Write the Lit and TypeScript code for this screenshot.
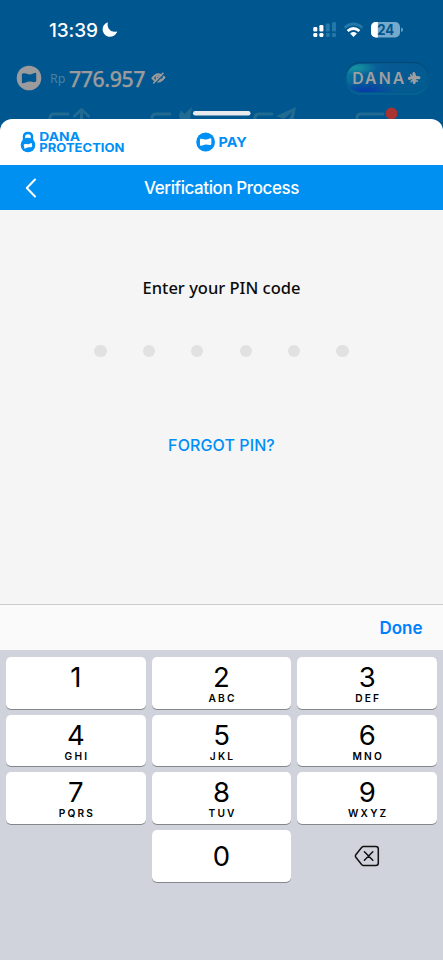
import { LitElement, html, svg, css, nothing } from "lit";
import { customElement, property } from "lit/decorators.js";

const flag = svg`<path stroke-linejoin="round" d="M-6.7 -3.3 Q-6.7 -4.2 -5.8 -4.3 C-3 -4.8 -1.4 -3.2 .8 -3.3 C2.8 -3.4 4 -4.6 6 -4.9 Q6.8 -5 6.8 -4.1 V2.7 Q6.8 3.6 5.9 3.8 C3.6 4.2 2.4 3.2 .4 3.3 C-1.8 3.4 -3 4.6 -5.8 4.9 Q-6.7 5 -6.7 4.1Z"/>`;

@customElement("phone-header")
export class PhoneHeader extends LitElement {
  static styles = css`
    :host { display: block; height: 120px; background: #00568f; position: relative; overflow: hidden; }
    .status { display: flex; align-items: center; height: 60px; padding: 0 40px 0 49px; }
    .time { font: 500 19px/24px Inter, sans-serif; color: #fff; letter-spacing: -0.1px; width: 51px; margin-top: 1px; }
    .moon { margin-left: 2px; }
    .right { margin-left: auto; display: block; }
    .balance { display: flex; align-items: center; height: 36px; padding: 0 13px 0 16px; color: #9b9a9c; }
    .rp { font: 400 12.5px/20px "Noto Sans", sans-serif; color: #4a80a0; margin: 1px 0 0 8px; width: 19px; }
    .sum { font: 500 21.4px/30px "Noto Sans", sans-serif; letter-spacing: -0.45px; width: 77px; margin-top: 1px; -webkit-text-stroke: 0.25px #9b9a9c; }
    .eye { margin-left: 5px; }
    .plus { margin-left: auto; }
    .behind { display: block; position: absolute; left: 0; top: 100px; }
    svg { display: block; flex: none; }
  `;
  render() {
    return html`
      <div class="status">
        <span class="time">13:39</span>
        <svg class="moon" width="16" height="16" viewBox="0 0 16 16"><path fill="#fff" d="M5.8 .7 C4.6 5.8 8.7 11 14.6 9.5 Q15.4 9.4 15 10.2 C12.5 15.1 6.5 16.2 3 12.7 C-1.1 8.8 .4 2.6 5.1 .5 Q5.9 .2 5.8 .7Z"/></svg>
        <svg class="right" width="92" height="20" viewBox="312 20 92 20">
          <g fill="#fff">
            <rect x="314.3" y="27" width="4" height="4.5" rx="1.2"/><rect x="320.4" y="25" width="4" height="6.5" rx="1.2"/>
            <rect x="314.3" y="33" width="4" height="4" rx="1.2"/><rect x="320.4" y="33" width="4" height="4" rx="1.2"/>
          </g>
          <g fill="#2378a8">
            <rect x="326.8" y="23.6" width="4" height="7.9" rx="1.2"/><rect x="333" y="22" width="4" height="9.5" rx="1.2"/>
            <rect x="326.8" y="33" width="4" height="4" rx="1.2"/><rect x="333" y="33" width="4" height="4" rx="1.2"/>
          </g>
          <g fill="none" stroke-width="2.8">
            <path stroke="#2378a8" d="M345.6 27.6 Q354.5 20.4 363.4 27.6"/>
            <path stroke="#fff" d="M348.6 31 Q354.5 26 360.4 31"/>
          </g>
          <path fill="#fff" d="M351.1 33.4 Q354.5 30.8 357.9 33.4 L354.5 36.9Z"/>
          <rect x="372" y="22" width="29" height="15.5" rx="4.8" fill="#76a9cb"/>
          <path fill="#fff" d="M378.8 22 V37.5 H376.8 A4.8 4.8 0 0 1 372 32.7 V26.8 A4.8 4.8 0 0 1 376.8 22Z"/>
          <path fill="#76a9cb" d="M402.2 27.6 Q404 28 404 29.8 Q404 31.6 402.2 32Z"/>
          <text x="378.2" y="34.8" font-family="Inter, sans-serif" font-size="14" font-weight="700" fill="#00568f" textLength="17" lengthAdjust="spacingAndGlyphs">24</text>
        </svg>
      </div>
      <div class="balance">
        <svg width="26" height="26" viewBox="-13 -13 26 26"><circle r="12.3" fill="#9b9a9c"/><g fill="#00568f" transform="scale(1.06)">${flag}</g></svg>
        <span class="rp">Rp</span><span class="sum">776.957</span>
        <svg class="eye" width="15" height="14" viewBox="0 0 15 14" fill="none" stroke="#9b9a9c" stroke-width="1.9"><path d="M1.4 7.2 Q7.2 -.4 13.4 6.4 Q7.5 14.4 1.4 7.2Z"/><circle cx="7.4" cy="7" r="2.1" stroke-width="1.5"/><path stroke="#00568f" stroke-width="1.2" d="M3.4 13 L13.4 2.9"/><path stroke-width="1.5" d="M2.2 12.6 L12.4 1.8"/></svg>
        <svg class="plus" width="86" height="34" viewBox="344 61 86 34">
          <defs>
            <linearGradient id="pill" x1="0" y1="0" x2="1" y2=".25"><stop offset="0" stop-color="#087e9d"/><stop offset=".25" stop-color="#08659a"/><stop offset=".5" stop-color="#075a94"/><stop offset="1" stop-color="#025b91"/></linearGradient>
            <radialGradient id="deep" cx=".22" cy="1" r=".38"><stop offset="0" stop-color="#0639ab"/><stop offset="1" stop-color="#0639ab" stop-opacity="0"/></radialGradient>
            <radialGradient id="teal" cx=".12" cy=".14" r=".26"><stop offset="0" stop-color="#1793a0"/><stop offset="1" stop-color="#1793a0" stop-opacity="0"/></radialGradient>
            <linearGradient id="rim" x1="0" y1="0" x2="0" y2="1"><stop offset="0" stop-color="#004a7a"/><stop offset="1" stop-color="#066994"/></linearGradient>
          </defs>
          <rect x="345" y="62.4" width="84" height="31.4" rx="15.7" fill="#02588d" stroke="url(#rim)" stroke-width="1.2"/>
          <rect x="346.5" y="64" width="81" height="28" rx="14" fill="url(#pill)"/>
          <rect x="346.5" y="64" width="81" height="28" rx="14" fill="url(#deep)"/>
          <rect x="346.5" y="64" width="81" height="28" rx="14" fill="url(#teal)"/>
          <text x="352.2" y="83.9" font-family="Inter, sans-serif" font-size="15.8" font-weight="600" fill="#a09fa0" textLength="52" lengthAdjust="spacing">DANA</text>
          <g transform="translate(414 78) rotate(8)" fill="none" stroke="#a09fa0" stroke-width="3" stroke-linecap="round"><path d="M-4.6 1 Q-1 -1.5 4.8 -1 M-.8 -4.4 Q1.4 -1 .8 4.6"/><path stroke-width="1.5" d="M-3.8 -2.8 L-1.5 -1 M4 2.8 L1.8 1.8 M-2.4 4 L-1 2"/></g>
        </svg>
      </div>
      <svg class="behind" width="443" height="20" viewBox="0 100 443 20" fill="none" stroke="#216a91" stroke-width="3" stroke-linecap="round" stroke-linejoin="round">
        <path d="M50 120 V118 Q50 114 54 114 H68 M81.5 120 V110 M74.5 116 L81.5 109.5 L88.5 116"/>
        <path d="M152 120 V118 Q152 114 156 114 H170"/>
        <path stroke="none" fill="#216a91" d="M181 110 L184.5 114 L192 107 L190 120 H180 L179 115Z"/>
        <path d="M255 120 V118 Q255 114 259 114 H272"/>
        <path stroke="none" fill="#216a91" d="M276 116 L296 107 L293.5 120 H289 L292 112 L284 119Z"/>
        <path d="M357 120 V118 Q357 114 361 114 H383"/>
        <circle cx="391.5" cy="113.5" r="5.9" fill="#a93232" stroke="none"/>
        <rect x="193" y="111" width="57.5" height="4.5" rx="2.2" fill="#e8e8ed" stroke="none"/>
      </svg>
    `;
  }
}

@customElement("num-key")
export class NumKey extends LitElement {
  @property() digit = "";
  @property() letters = "";
  static styles = css`
    :host { display: flex; flex-direction: column; align-items: center; box-sizing: border-box; height: 51.7px; border-radius: 5px; background: #fff; box-shadow: 0 1px 0 #85878b; padding-top: 4px; color: #000; }
    :host([digit="0"]) { padding-top: 10px; }
    .digit { font: 385 27.5px/32px Inter, sans-serif; }
    .letters { font: 600 10.2px/10px Inter, sans-serif; letter-spacing: 2.2px; margin-right: -2.2px; }
  `;
  render() {
    return html`<span class="digit">${this.digit}</span>${this.letters ? html`<span class="letters">${this.letters}</span>` : nothing}`;
  }
}

@customElement("app-root")
export class AppRoot extends LitElement {
  static styles = css`
    :host { display: flex; flex-direction: column; width: 443px; height: 960px; overflow: hidden; background: #00568f; }
    svg { display: block; }
    .sheet { flex: none; background: #fff; border-radius: 12px 12px 0 0; margin-top: -0.6px; height: 45.6px; position: relative; display: flex; align-items: flex-end; }
    .title { display: grid; grid-template-columns: 60px 1fr 60px; align-items: center; height: 45px; flex: none; background: #0090f2; color: #fff; }
    .back { margin-left: 24px; }
    .title h1 { margin: 0; text-align: center; font: 500 17px/24px Inter, sans-serif; letter-spacing: -0.42px; }
    .body { flex: none; height: 394px; background: #f5f5f5; display: flex; flex-direction: column; align-items: center; box-sizing: border-box; padding-top: 66px; }
    .prompt { font: 500 16.5px/24px "Noto Sans", sans-serif; color: #0b0b0b; }
    .dots { display: flex; gap: 36.1px; margin-top: 45px; }
    .dot { width: 12.3px; height: 12.3px; border-radius: 50%; background: #e1e1e1; }
    .forgot { font: 500 16px/24px Inter, sans-serif; color: #008ff5; margin-top: 75.7px; letter-spacing: 0.1px; }
    .tools { flex: none; box-sizing: border-box; height: 46px; background: #fafafa; border-top: 1px solid #cbcbcd; display: flex; align-items: center; justify-content: flex-end; padding-right: 20.5px; }
    .done { font: 600 17px/24px Inter, sans-serif; color: #0080ff; }
    .keys { flex: 1; background: #d0d3db; display: grid; grid-template-columns: repeat(3, 1fr); grid-auto-rows: 51.7px; gap: 6px; padding: 7px 6px 0; align-content: start; }
    .delete { display: flex; justify-content: center; align-items: center; }
  `;
  render() {
    const keys = [["1", ""], ["2", "ABC"], ["3", "DEF"], ["4", "GHI"], ["5", "JKL"], ["6", "MNO"], ["7", "PQRS"], ["8", "TUV"], ["9", "WXYZ"]];
    return html`
      <phone-header></phone-header>
      <div class="sheet">
        <svg width="443" height="45" viewBox="0 120 443 45" fill="#008ff5" font-family="Inter, sans-serif" font-weight="650">
          <path fill="none" stroke="#008ff5" stroke-width="2.4" d="M24 140 V136.5 Q24 133 28 133 Q32 133 32 136.5 V140"/>
          <circle cx="28" cy="145" r="7.3"/>
          <g fill="#fff" transform="translate(28 145.8) rotate(-8) scale(.6 .48)">${flag}</g>
          <text x="39.3" y="141" font-size="12.1" textLength="40.7" lengthAdjust="spacingAndGlyphs">DANA</text>
          <text x="39.3" y="152.2" font-size="12.1" textLength="85.2" lengthAdjust="spacingAndGlyphs">PROTECTION</text>
          <circle cx="205.6" cy="142" r="9.4"/>
          <g fill="#fff" transform="translate(205.6 142) scale(.84 .76)">${flag}</g>
          <text x="218.5" y="147" font-size="13.8" font-weight="700" textLength="28.3" lengthAdjust="spacingAndGlyphs">PAY</text>
        </svg>
      </div>
      <div class="title">
        <svg class="back" width="14" height="22" viewBox="0 0 14 22"><path d="M11 2.5 L2.8 11 L11 19.5" fill="none" stroke="#fff" stroke-width="2" stroke-linecap="round" stroke-linejoin="round"/></svg>
        <h1>Verification Process</h1>
      </div>
      <div class="body">
        <div class="prompt">Enter your PIN code</div>
        <div class="dots">${[1, 2, 3, 4, 5, 6].map(() => html`<div class="dot"></div>`)}</div>
        <div class="forgot">FORGOT PIN?</div>
      </div>
      <div class="tools"><span class="done">Done</span></div>
      <div class="keys">
        ${keys.map(([d, l]) => html`<num-key digit=${d} letters=${l}></num-key>`)}
        <span></span>
        <num-key digit="0"></num-key>
        <div class="delete"><svg width="26" height="22" viewBox="0 0 26 22" fill="none" stroke="#111" stroke-width="1.5" stroke-linecap="round" stroke-linejoin="round"><path d="M9.4 1.5 H21.8 Q24.3 1.5 24.3 4 V18 Q24.3 20.5 21.8 20.5 H9.4 Q8.5 20.5 7.8 19.8 L2 12.5 Q.8 11 2 9.5 L7.8 2.2 Q8.5 1.5 9.4 1.5Z M10.4 6.8 L18.8 15.2 M18.8 6.8 L10.4 15.2"/></svg></div>
      </div>
    `;
  }
}
